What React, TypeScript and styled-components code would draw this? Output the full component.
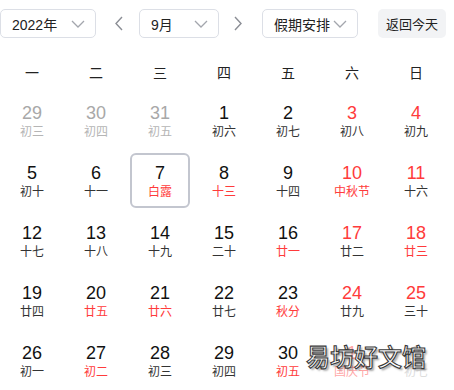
import React from 'react';
import styled, { createGlobalStyle } from 'styled-components';

const GlobalStyle = createGlobalStyle`
  body {
    margin: 0;
    background: #fff;
    font-family: "Liberation Sans", "Noto Sans CJK SC", sans-serif;
  }
`;

const Page = styled.div`
  position: relative;
  width: 454px;
  height: 390px;
  overflow: hidden;
`;

const Toolbar = styled.div`
  display: flex;
  align-items: center;
  padding-top: 9px;
  height: 29px;
`;

const Select = styled.div<{ $w: number; $ml: number }>`
  box-sizing: border-box;
  width: ${p => p.$w}px;
  height: 29px;
  margin-left: ${p => p.$ml}px;
  display: flex;
  align-items: center;
  justify-content: space-between;
  padding: 0 10px 0 11px;
  border: 1px solid #dcdfe6;
  border-radius: 5px;
  font-family: "Liberation Sans", "Noto Sans CJK SC", sans-serif;
  font-size: 14px;
  color: #222;
`;

const Arrow = styled.div<{ $ml: number }>`
  width: 10px;
  height: 29px;
  margin-left: ${p => p.$ml}px;
  display: flex;
  align-items: center;
  justify-content: center;
`;

const TodayButton = styled.div`
  box-sizing: border-box;
  width: 68px;
  height: 29px;
  margin-left: 20px;
  display: flex;
  align-items: center;
  justify-content: center;
  background: #f2f3f5;
  border-radius: 5px;
  font-family: "Noto Sans CJK SC", sans-serif;
  font-size: 13px;
  color: #222;
`;

const Grid = styled.div`
  display: grid;
  grid-template-columns: repeat(7, 64px);
  grid-auto-rows: 55px;
  row-gap: 5px;
`;

const WeekHead = styled.div`
  display: grid;
  grid-template-columns: repeat(7, 64px);
  height: 30px;
  margin: 19px 0 6px;
  align-items: center;
  justify-items: center;
  font-family: "Noto Sans CJK SC", sans-serif;
  font-size: 14px;
  color: #222;
`;

const Cell = styled.div<{ $selected?: boolean; $faded?: boolean }>`
  box-sizing: border-box;
  margin: 0 2px;
  display: flex;
  flex-direction: column;
  align-items: center;
  justify-content: center;
  border: 2px solid ${p => (p.$selected ? '#c3c6cf' : 'transparent')};
  border-radius: 6px;
  opacity: ${p => (p.$faded ? 0.45 : 1)};
`;

const DayNum = styled.div<{ $color: string }>`
  font-family: "Liberation Sans", sans-serif;
  font-size: 18px;
  line-height: 20px;
  color: ${p => p.$color};
`;

const Lunar = styled.div<{ $color: string }>`
  font-family: "Noto Sans CJK SC", sans-serif;
  font-size: 12px;
  line-height: 16px;
  color: ${p => p.$color};
`;

const Watermark = styled.div`
  position: absolute;
  left: 306px;
  top: 338px;
  font-family: "Noto Sans CJK SC", sans-serif;
  font-weight: 500;
  font-size: 24px;
  color: #fff;
  -webkit-text-stroke: 1.1px #3a3a3a;
  text-shadow: 2px 2px 2px rgba(0, 0, 0, 0.35);
`;

const Chevron = () => (
  <svg width="14" height="8" viewBox="0 0 14 8">
    <path d="M1 1l6 6 6-6" fill="none" stroke="#a3a6ad" strokeWidth="1.3" />
  </svg>
);

const Side = ({ dir }: { dir: 'l' | 'r' }) => (
  <svg width="9" height="15" viewBox="0 0 9 15">
    <path
      d={dir === 'l' ? 'M8 1L2 7.5 8 14' : 'M1 1l6 6.5L1 14'}
      fill="none"
      stroke="#8b8e95"
      strokeWidth="1.4"
    />
  </svg>
);

const BLACK = '#111';
const TEXT = '#333';
const GRAY = '#a8a8a8';
const LGRAY = '#b5b5b5';
const RED = '#ff3b3b';

type Day = { n: number; l: string; nc: string; lc: string; sel?: boolean; faded?: boolean };

const d = (n: number, l: string, nc = BLACK, lc = TEXT, extra: Partial<Day> = {}): Day => ({
  n,
  l,
  nc,
  lc,
  ...extra,
});

const days: Day[] = [
  d(29, '初三', GRAY, LGRAY),
  d(30, '初四', GRAY, LGRAY),
  d(31, '初五', GRAY, LGRAY),
  d(1, '初六'),
  d(2, '初七'),
  d(3, '初八', RED),
  d(4, '初九', RED),
  d(5, '初十'),
  d(6, '十一'),
  d(7, '白露', BLACK, RED, { sel: true }),
  d(8, '十三', BLACK, RED),
  d(9, '十四'),
  d(10, '中秋节', RED, RED),
  d(11, '十六', RED),
  d(12, '十七'),
  d(13, '十八'),
  d(14, '十九'),
  d(15, '二十'),
  d(16, '廿一', BLACK, RED),
  d(17, '廿二', RED),
  d(18, '廿三', RED, RED),
  d(19, '廿四'),
  d(20, '廿五', BLACK, RED),
  d(21, '廿六', BLACK, RED),
  d(22, '廿七'),
  d(23, '秋分', BLACK, RED),
  d(24, '廿九', RED),
  d(25, '三十', RED),
  d(26, '初一'),
  d(27, '初二', BLACK, RED),
  d(28, '初三'),
  d(29, '初四'),
  d(30, '初五', BLACK, RED),
  d(1, '国庆节', RED, RED, { faded: true }),
  d(2, '初七', GRAY, LGRAY, { faded: true }),
];

const weekdays = ['一', '二', '三', '四', '五', '六', '日'];

export default function App() {
  return (
    <Page>
      <GlobalStyle />
      <Toolbar>
        <Select $w={96} $ml={0}>
          <span>2022年</span>
          <Chevron />
        </Select>
        <Arrow $ml={17}>
          <Side dir="l" />
        </Arrow>
        <Select $w={80} $ml={16}>
          <span>9月</span>
          <Chevron />
        </Select>
        <Arrow $ml={14}>
          <Side dir="r" />
        </Arrow>
        <Select $w={96} $ml={19}>
          <span style={{ fontFamily: '"Noto Sans CJK SC", sans-serif' }}>假期安排</span>
          <Chevron />
        </Select>
        <TodayButton>返回今天</TodayButton>
      </Toolbar>
      <WeekHead>
        {weekdays.map(w => (
          <span key={w}>{w}</span>
        ))}
      </WeekHead>
      <Grid>
        {days.map((day, i) => (
          <Cell key={i} $selected={day.sel} $faded={day.faded}>
            <DayNum $color={day.nc}>{day.n}</DayNum>
            <Lunar $color={day.lc}>{day.l}</Lunar>
          </Cell>
        ))}
      </Grid>
      <Watermark>易坊好文馆</Watermark>
    </Page>
  );
}
